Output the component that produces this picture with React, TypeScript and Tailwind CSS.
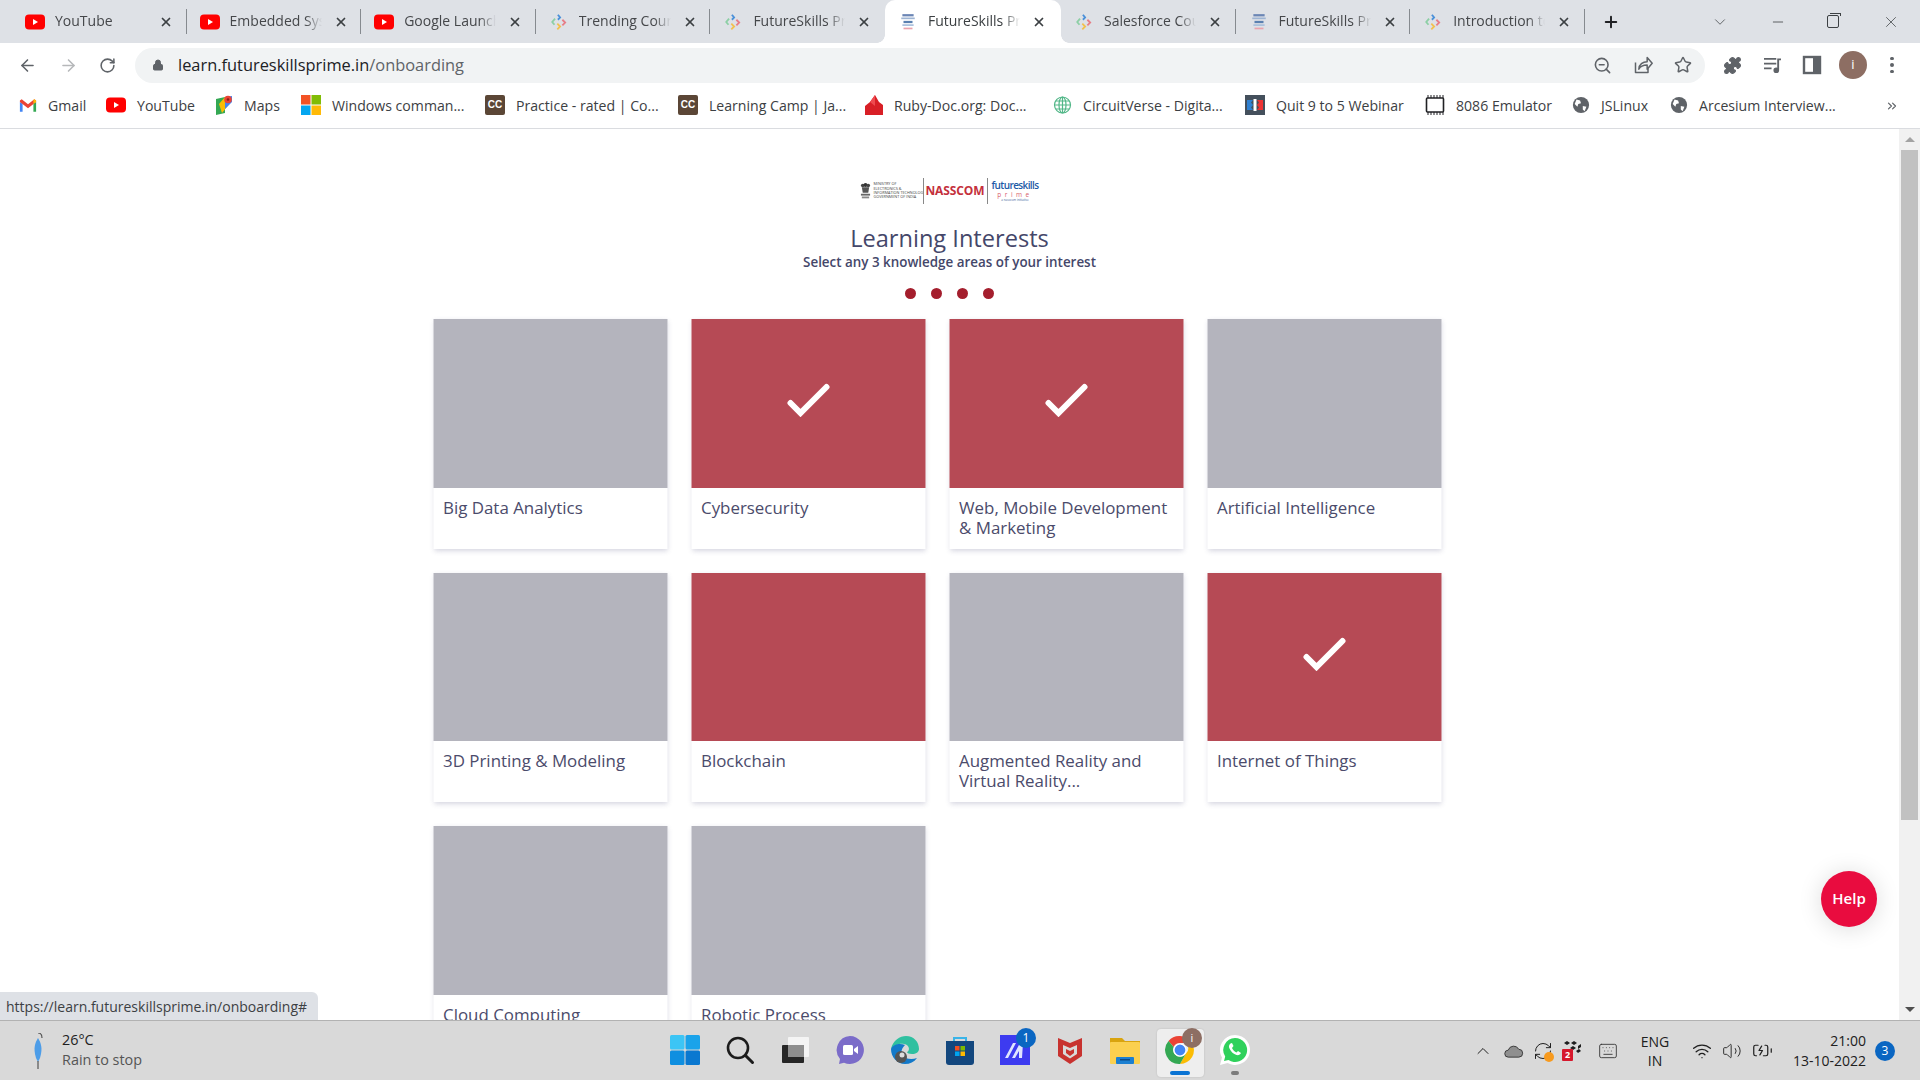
import {
  ArrowLeft,
  ArrowRight,
  BatteryCharging,
  ChevronDown,
  ChevronUp,
  ChevronsRight,
  Keyboard,
  Lock,
  Minus,
  Plus,
  Puzzle,
  RefreshCw,
  RotateCw,
  Star,
  Volume2,
  Wifi,
  X,
  ZoomOut,
} from "lucide-react";

const ui = "font-['Open_Sans',sans-serif]";

function YouTubeIcon() {
  return (
    <svg viewBox="0 0 20 20" className="w-5 h-5 shrink-0">
      <rect x="0" y="2.5" width="20" height="15" rx="4" fill="#f00" />
      <path d="M8 7l5 3-5 3z" fill="#fff" />
    </svg>
  );
}

function FsIcon() {
  return (
    <svg viewBox="0 0 16 16" className="w-[18px] h-[18px] shrink-0" fill="none" strokeWidth="1.6">
      <path d="M4.5 5L2 8l2 2.5" stroke="#8ccfa5" />
      <path d="M7 1.5L9 4 7 6" stroke="#4a90d9" />
      <path d="M11 6l2.5 2.5L11 11" stroke="#e77d86" />
      <path d="M6.5 9.5l2.5 2.5-2.5 2.5" stroke="#f2c14e" />
    </svg>
  );
}

function StackIcon() {
  return (
    <svg viewBox="0 0 16 16" className="w-[18px] h-[18px] shrink-0">
      <rect x="3" y="1" width="10" height="2" fill="#6b86b5" />
      <rect x="2" y="4" width="12" height="1.5" fill="#9db4d3" />
      <rect x="4" y="7" width="8" height="2" fill="#5a80b0" />
      <rect x="3" y="10" width="10" height="1.5" fill="#a8c0dc" />
      <rect x="4" y="13" width="8" height="1.5" fill="#e9a3ad" />
    </svg>
  );
}

function GmailIcon() {
  return (
    <svg viewBox="0 0 20 16" className="w-[18px] h-[15px] shrink-0">
      <path d="M1 15V4l3 2v9z" fill="#4285f4" />
      <path d="M16 15V6l3-2v11z" fill="#34a853" />
      <path d="M1 4l9 7 9-7V2.5L17 1l-7 5.5L3 1 1 2.5z" fill="#ea4335" />
      <path d="M16 6l3-2V2.5L17 1l-1 .8z" fill="#fbbc04" />
    </svg>
  );
}

function MapsIcon() {
  return (
    <svg viewBox="0 0 18 20" className="w-[18px] h-5 shrink-0">
      <path d="M1 4l9-2v16l-9 2z" fill="#34a853" />
      <path d="M4 9l6-7h6v5L7 18z" fill="#fbbc04" />
      <path d="M10 2l7-1v6l-7 7z" fill="#4285f4" />
      <circle cx="13" cy="4.5" r="3.8" fill="#ea4335" />
      <circle cx="13" cy="4.5" r="1.3" fill="#8c1d18" />
    </svg>
  );
}

function WindowsIcon() {
  return (
    <svg viewBox="0 0 20 20" className="w-5 h-5 shrink-0">
      <rect x="0" y="0" width="9.5" height="9.5" fill="#f35325" />
      <rect x="10.5" y="0" width="9.5" height="9.5" fill="#81bc06" />
      <rect x="0" y="10.5" width="9.5" height="9.5" fill="#05a6f0" />
      <rect x="10.5" y="10.5" width="9.5" height="9.5" fill="#ffba08" />
    </svg>
  );
}

function CcIcon() {
  return (
    <div className="w-5 h-5 shrink-0 bg-[#5b4636] rounded-[2px] flex items-center justify-center text-white text-[10px] font-bold leading-none font-['Liberation_Sans',sans-serif]">
      CC
    </div>
  );
}

function RubyIcon() {
  return (
    <svg viewBox="0 0 18 20" className="w-[18px] h-5 shrink-0">
      <path d="M0 20V11l5-4 5-7 4 7 4 3v10z" fill="#d81f26" />
      <path d="M5 7l5-7v11z" fill="#ef4a4f" />
    </svg>
  );
}

function CircuitIcon() {
  return (
    <svg viewBox="0 0 20 20" className="w-5 h-5 shrink-0" fill="none" stroke="#52b788" strokeWidth="1.2">
      <circle cx="10.5" cy="10" r="8" />
      <ellipse cx="10.5" cy="10" rx="3.5" ry="8" />
      <path d="M2.5 10h16M3.5 6h14M3.5 14h14M10.5 2v16" />
    </svg>
  );
}

function QuitIcon() {
  return (
    <svg viewBox="0 0 20 20" className="w-5 h-5 shrink-0">
      <rect width="20" height="20" fill="#44505c" />
      <path d="M2 5h6l-2 2.5L8 10l-2 2.5L8 15H2z" fill="#2f80d1" />
      <path d="M18 5h-6l2 2.5-2 2.5 2 2.5-2 2.5h6z" fill="#e33" />
      <rect x="8.5" y="4" width="3" height="12" fill="#fff" />
    </svg>
  );
}

function ChipIcon() {
  return (
    <svg viewBox="0 0 20 20" className="w-5 h-5 shrink-0" fill="none" stroke="#202124">
      <rect x="1.5" y="3" width="17" height="14" rx="1" strokeWidth="1.6" />
      <path d="M3 3V0M6 3V0M9 3V0M12 3V0M15 3V0M18 3V0M3 20v-3M6 20v-3M9 20v-3M12 20v-3M15 20v-3M18 20v-3" strokeWidth="1" />
    </svg>
  );
}

function GlobeIcon() {
  return (
    <svg viewBox="0 0 20 20" className="w-[18px] h-[18px] shrink-0">
      <circle cx="10" cy="10" r="9" fill="#5f6368" />
      <path d="M5 4l4 1 1 3-3 1-1 3-3-3zM12 11l4 1-2 5-2-2z" fill="#fff" />
    </svg>
  );
}

function EmblemIcon() {
  return (
    <svg viewBox="0 0 12 18" className="w-[11px] h-[18px] shrink-0">
      <circle cx="3" cy="3" r="2" fill="#444" />
      <circle cx="6" cy="2.5" r="2.2" fill="#333" />
      <circle cx="9" cy="3" r="2" fill="#444" />
      <path d="M2 5h8l-1 6H3z" fill="#555" />
      <rect x="1" y="12" width="10" height="2" fill="#666" />
      <rect x="2" y="15" width="8" height="2" fill="#888" />
    </svg>
  );
}

function CheckMark() {
  return (
    <svg viewBox="0 0 44 34" className="w-11 h-[34px] mb-[6px]" fill="none" stroke="#fff" strokeWidth="6" strokeLinecap="round" strokeLinejoin="miter">
      <path d="M4 20l10 10L40 4" />
    </svg>
  );
}

const tabs = [
  { title: "YouTube", icon: <YouTubeIcon />, sep: true },
  { title: "Embedded Systems", icon: <YouTubeIcon />, sep: true },
  { title: "Google Launches", icon: <YouTubeIcon />, sep: true },
  { title: "Trending Courses", icon: <FsIcon />, sep: true },
  { title: "FutureSkills Prime", icon: <FsIcon />, sep: false },
  { title: "FutureSkills Prime", icon: <StackIcon />, sep: false, active: true },
  { title: "Salesforce Course", icon: <FsIcon />, sep: true },
  { title: "FutureSkills Prime", icon: <StackIcon />, sep: true },
  { title: "Introduction to", icon: <FsIcon />, sep: true },
];

const bookmarks = [
  { label: "Gmail", icon: <GmailIcon />, w: "w-[87px]" },
  { label: "YouTube", icon: <YouTubeIcon />, w: "w-[109px]" },
  { label: "Maps", icon: <MapsIcon />, w: "w-[86px]" },
  { label: "Windows comman...", icon: <WindowsIcon />, w: "w-[184px]" },
  { label: "Practice - rated | Co...", icon: <CcIcon />, w: "w-[193px]" },
  { label: "Learning Camp | Ja...", icon: <CcIcon />, w: "w-[187px]" },
  { label: "Ruby-Doc.org: Doc...", icon: <RubyIcon />, w: "w-[187px]" },
  { label: "CircuitVerse - Digita...", icon: <CircuitIcon />, w: "w-[193px]" },
  { label: "Quit 9 to 5 Webinar", icon: <QuitIcon />, w: "w-[180px]" },
  { label: "8086 Emulator", icon: <ChipIcon />, w: "w-[147px]" },
  { label: "JSLinux", icon: <GlobeIcon />, w: "w-[98px]" },
  { label: "Arcesium Interview...", icon: <GlobeIcon />, w: "w-[170px]" },
];

const interests = [
  { label: "Big Data Analytics" },
  { label: "Cybersecurity", on: true, check: true },
  { label: "Web, Mobile Development & Marketing", on: true, check: true },
  { label: "Artificial Intelligence" },
  { label: "3D Printing & Modeling" },
  { label: "Blockchain", on: true },
  { label: "Augmented Reality and Virtual Reality..." },
  { label: "Internet of Things", on: true, check: true },
  { label: "Cloud Computing" },
  { label: "Robotic Process Automation" },
];

function TabStrip() {
  return (
    <div className="h-[43px] shrink-0 bg-[#dee1e6] flex items-start pl-[12px]">
      {tabs.map((t, i) => (
        <div
          key={i}
          className={
            t.active
              ? "relative w-[176px] h-[43px] bg-white rounded-t-[10px] flex items-center pl-[13px]"
              : "relative w-[174.6px] h-[43px] flex items-center pl-[13px]"
          }
        >
          <div className="w-5 flex justify-center shrink-0">{t.icon}</div>
          <span
            className={`${t.active ? "text-[#3c4043]" : "text-[#45474a]"} ml-[10px] mb-[2px] w-[92px] overflow-hidden whitespace-nowrap text-[14px] [mask-image:linear-gradient(to_right,black_82%,transparent)]`}
          >
            {t.title}
          </span>
          <X className="w-[14px] h-[14px] ml-[12px] text-[#3c4043] shrink-0" strokeWidth={3} />
          {t.sep && <div className="absolute right-0 top-[9px] h-[25px] w-px bg-[#868a8f]" />}
          {t.active && (
            <>
              <div className="absolute bottom-0 -left-2 w-2 h-2 bg-[radial-gradient(circle_at_0_0,#dee1e6_7.5px,#fff_8px)]" />
              <div className="absolute bottom-0 -right-2 w-2 h-2 bg-[radial-gradient(circle_at_100%_0,#dee1e6_7.5px,#fff_8px)]" />
            </>
          )}
        </div>
      ))}
      <div className="h-[43px] flex items-center ml-[17px]">
        <Plus className="w-[18px] h-[18px] text-[#202124]" strokeWidth={2.6} />
      </div>
      <div className="h-[43px] flex-1 flex items-center justify-end text-[#3c4043]">
        <ChevronDown className="w-[18px] h-[18px] mr-[41px]" strokeWidth={1} />
        <Minus className="w-[16px] h-[16px] mr-[41px]" strokeWidth={1.2} />
        <div className="relative w-[12px] h-[13px] mr-[43px] border border-[#3c4043] rounded-[2px] bg-[#dee1e6]">
          <div className="absolute -top-[3px] left-[2px] w-[11px] h-[3px] border-t border-r border-[#3c4043]" />
        </div>
        <X className="w-[18px] h-[18px] mr-[20px]" strokeWidth={1} />
      </div>
    </div>
  );
}

function Toolbar() {
  return (
    <div className="h-[42px] shrink-0 bg-white flex items-center text-[#5f6368] pl-[18px] pt-[2px]">
      <ArrowLeft className="w-[19px] h-[19px] mr-[22px]" strokeWidth={2} />
      <ArrowRight className="w-[19px] h-[19px] mr-[21px] text-[#b6b8ba]" strokeWidth={2} />
      <RotateCw className="w-[17px] h-[17px] mr-[19px]" strokeWidth={2.2} />
      <div className="w-[1570px] h-[35px] rounded-full bg-[#f1f3f4] flex items-center pl-[17px] pr-[13px]">
        <Lock className="w-[12px] h-[14px] fill-[#5f6368] mr-[14px]" strokeWidth={2} />
        <span className="text-[16.4px] text-[#202124]">
          learn.futureskillsprime.in<span className="text-[#5f6368]">/onboarding</span>
        </span>
        <div className="flex-1" />
        <ZoomOut className="w-[19px] h-[19px] mr-[21px]" strokeWidth={2} />
        <svg viewBox="0 0 24 24" className="w-[20px] h-[20px] mr-[21px]" fill="none" stroke="#5f6368" strokeWidth="1.8" strokeLinejoin="round">
          <path d="M3 9v12h15v-5" />
          <path d="M7 17c0-6 5-9 10-9V3l6 7-6 7v-5c-4 0-8 1-10 5z" />
        </svg>
        <Star className="w-[18px] h-[18px]" strokeWidth={2} />
      </div>
      <Puzzle className="w-[19px] h-[19px] ml-[18px] fill-[#5f6368]" strokeWidth={1.5} />
      <svg viewBox="0 0 20 18" className="w-[19px] h-[17px] ml-[21px]" fill="none" stroke="#5f6368" strokeWidth="2">
        <path d="M1 2h13M1 7h13M1 12h8M16 14V2.5h3" />
        <circle cx="14" cy="14" r="2" fill="#5f6368" />
      </svg>
      <svg viewBox="0 0 20 20" className="w-[20px] h-[20px] ml-[20px]">
        <rect x="2" y="2" width="16" height="16" fill="none" stroke="#5f6368" strokeWidth="2.4" />
        <rect x="11" y="2" width="7" height="16" fill="#5f6368" />
      </svg>
      <div className="w-7 h-7 ml-[17px] rounded-full bg-[#8d6e63] text-white text-[13px] flex items-center justify-center">i</div>
      <div className="ml-[23px] flex flex-col gap-[3px]">
        <div className="w-[3.5px] h-[3.5px] rounded-full bg-[#5f6368]" />
        <div className="w-[3.5px] h-[3.5px] rounded-full bg-[#5f6368]" />
        <div className="w-[3.5px] h-[3.5px] rounded-full bg-[#5f6368]" />
      </div>
    </div>
  );
}

function BookmarkBar() {
  return (
    <div className="h-[44px] shrink-0 bg-white border-b border-[#dadce0] flex items-center pl-[19px] pb-[2px]">
      {bookmarks.map((b) => (
        <div key={b.label} className={`${b.w} flex items-center gap-[11px] shrink-0`}>
          {b.icon}
          <span className="text-[14.1px] text-[#3c4043] whitespace-nowrap">{b.label}</span>
        </div>
      ))}
      <ChevronsRight className="w-[14px] h-[14px] ml-[45px] text-[#5f6368]" strokeWidth={2} />
    </div>
  );
}

function Logo() {
  return (
    <div className="h-[27px] flex items-center">
      <EmblemIcon />
      <div className="ml-[2px] flex flex-col text-[3.8px] leading-[4.3px] text-[#444] w-[50px] whitespace-nowrap overflow-hidden">
        <span>MINISTRY OF</span>
        <span>ELECTRONICS &amp;</span>
        <span>INFORMATION TECHNOLOGY</span>
        <span>GOVERNMENT OF INDIA</span>
      </div>
      <div className="w-px h-[26px] bg-[#888]" />
      <span className="ml-[1px] text-[12px] font-bold text-[#c4303c] tracking-[-0.1px]">NASSCOM</span>
      <div className="w-px h-[26px] bg-[#888] ml-[2px]" />
      <div className="ml-1 flex flex-col items-center leading-none">
        <span className="text-[10px] font-semibold text-[#1c5aa6] tracking-[-0.6px] leading-[11px]">futureskills</span>
        <span className="text-[6.5px] text-[#d8606c] tracking-[3.5px] leading-[7px]">prime</span>
        <span className="text-[3px] text-[#3a5f9c] leading-[4px]">a nasscom initiative</span>
      </div>
    </div>
  );
}

function InterestCard({ label, on, check }: { label: string; on?: boolean; check?: boolean }) {
  return (
    <div className="w-[234px] h-[229.5px] mr-6 mb-6 bg-white shadow-[0_2px_5px_rgba(70,70,120,0.22)]">
      <div className={`${on ? "bg-[#b64a55]" : "bg-[#b4b4bd]"} h-[168.5px] flex items-center justify-center`}>
        {check && <CheckMark />}
      </div>
      <div className="px-[10px] pt-[10px] text-[16.9px] leading-5 text-[#4b4b6b]">{label}</div>
    </div>
  );
}

function Scrollbar() {
  return (
    <div className="w-[21px] shrink-0 bg-[#f1f1f1] flex flex-col items-center">
      <div className="h-[21px] flex items-center justify-center">
        <div className="border-x-[5px] border-x-transparent border-b-[5px] border-b-[#a3a3a3]" />
      </div>
      <div className="w-[17px] h-[670px] bg-[#c1c1c1]" />
      <div className="flex-1" />
      <div className="h-[21px] flex items-center justify-center">
        <div className="border-x-[5px] border-x-transparent border-t-[5px] border-t-[#505050]" />
      </div>
    </div>
  );
}

function ChromeIcon() {
  return (
    <svg viewBox="0 0 30 30" className="w-[30px] h-[30px]">
      <path d="M15 1a14 14 0 0 1 12.1 7H15a7 7 0 0 0-6.4 4.1L3.5 6A14 14 0 0 1 15 1z" fill="#ea4335" />
      <path d="M27.1 8A14 14 0 0 1 15 29l6-10.5A7 7 0 0 0 21 8z" fill="#fbbc04" />
      <path d="M3.5 6A14 14 0 0 0 15 29l6-10.5a7 7 0 0 1-12.4-6.4z" fill="#34a853" />
      <circle cx="15" cy="15" r="6" fill="#4285f4" stroke="#fff" strokeWidth="1.2" />
    </svg>
  );
}

function TaskbarApps() {
  return (
    <div className="flex items-center gap-[25px] -mt-[1px] shrink-0">
      <svg viewBox="0 0 30 30" className="w-[30px] h-[30px]">
        <rect x="0" y="0" width="14.5" height="14.5" rx="1.5" fill="#3cc5f5" />
        <rect x="15.5" y="0" width="14.5" height="14.5" rx="1.5" fill="#1aa3ea" />
        <rect x="0" y="15.5" width="14.5" height="14.5" rx="1.5" fill="#0f8fe0" />
        <rect x="15.5" y="15.5" width="14.5" height="14.5" rx="1.5" fill="#0a78d0" />
      </svg>
      <svg viewBox="0 0 30 30" className="w-[30px] h-[30px]" fill="none" stroke="#1c1c1c">
        <circle cx="13" cy="13" r="10" strokeWidth="2.6" />
        <path d="M20.5 20.5l7 7" strokeWidth="3" strokeLinecap="round" />
      </svg>
      <svg viewBox="0 0 30 30" className="w-[30px] h-[30px]">
        <rect x="2" y="10" width="22" height="18" rx="1" fill="#262626" />
        <rect x="8" y="2" width="21" height="20" rx="1" fill="#f4f4f4" />
        <rect x="8" y="10" width="16" height="12" fill="#8e8e8e" />
      </svg>
      <svg viewBox="0 0 30 30" className="w-[30px] h-[30px]">
        <path d="M15 1a14 14 0 1 1-6 26.7L4 29l1-5A14 14 0 0 1 15 1z" fill="#7b6cc9" />
        <rect x="8" y="10" width="10" height="10" rx="1.5" fill="#fff" />
        <path d="M19 14l4-3v8l-4-3z" fill="#fff" />
      </svg>
      <svg viewBox="0 0 30 30" className="w-[30px] h-[30px]">
        <path d="M1 14C3 5 10 1 16 1c8 0 13 6 13 13 0 3-3 5-7 5-3 0-5-1-5-2 3-1 3-7-3-8-5-1-10 2-13 5z" fill="#2fc0a0" />
        <path d="M1 14c0 8 6 15 14 15 5 0 9-2 12-6-5 2-12 1-14-2-3-4-1-8 2-11C10 8 3 9 1 14z" fill="#1379c9" />
        <circle cx="11" cy="22" r="6" fill="#555" />
        <circle cx="12" cy="20" r="2.5" fill="#ddd" />
      </svg>
      <svg viewBox="0 0 30 30" className="w-[30px] h-[30px]" fill="none">
        <path d="M9 7V3h12v4" stroke="#39b4e8" strokeWidth="2" />
        <path d="M1 6h28v21a3 3 0 0 1-3 3H4a3 3 0 0 1-3-3z" fill="#13477e" />
        <rect x="10" y="11" width="4.5" height="4.5" fill="#f25022" />
        <rect x="15.5" y="11" width="4.5" height="4.5" fill="#7fba00" />
        <rect x="10" y="16.5" width="4.5" height="4.5" fill="#00a4ef" />
        <rect x="15.5" y="16.5" width="4.5" height="4.5" fill="#ffb900" />
      </svg>
      <div className="relative w-[30px] h-[30px]">
        <svg viewBox="0 0 30 30" className="w-[30px] h-[30px]">
          <rect width="30" height="30" fill="#3d3bf0" />
          <path d="M5 23L13 8h3L8 23zM12 23l8-15h3l-1 15h-3v-7l-4 7z" fill="#dfe4ff" />
        </svg>
        <div className="absolute -top-[7px] -right-[6px] w-5 h-5 rounded-full bg-[#0a66c2] text-white text-[12px] flex items-center justify-center">1</div>
      </div>
      <svg viewBox="0 0 30 30" className="w-[30px] h-[30px]">
        <path d="M3 3l12 5 12-5v18L15 29 3 21z" fill="#c8322f" />
        <path d="M8 10l7 3 7-3v9l-7 4.5-7-4.5z" fill="#d9d9d9" />
        <path d="M11 14l4 2 4-2v4l-4 3-4-3z" fill="#c8322f" />
      </svg>
      <svg viewBox="0 0 30 30" className="w-[30px] h-[30px]">
        <path d="M0 3h12l3 3h15v6H0z" fill="#d9a40f" />
        <rect y="7" width="30" height="22" rx="1" fill="#fbd04f" />
        <rect x="6" y="22" width="18" height="7" rx="1" fill="#1b7fd1" />
        <rect x="10" y="24" width="10" height="1.5" fill="#0c4a86" />
      </svg>
      <div className="relative w-[30px] h-[30px]">
        <div className="absolute -top-[6px] -left-2 w-[47px] h-[48px] rounded-[4px] bg-[#eeeeee] shadow-[0_0_2px_rgba(0,0,0,0.15)]" />
        <div className="absolute -bottom-[10px] left-[5px] w-5 h-[4px] rounded-full bg-[#0a74d4]" />
        <div className="relative">
          <ChromeIcon />
        </div>
        <div className="absolute -top-[7px] right-[-7px] w-5 h-5 rounded-full bg-[#8d6e63] text-white text-[11px] flex items-center justify-center">i</div>
      </div>
      <div className="relative w-[30px] h-[30px]">
        <svg viewBox="0 0 30 30" className="w-[30px] h-[30px]">
          <path d="M15 0a15 15 0 1 1-7.5 28L0 30l2-7.5A15 15 0 0 1 15 0z" fill="#fff" />
          <path d="M15 3a12 12 0 1 1-6.5 22L4 26l1.2-4.5A12 12 0 0 1 15 3z" fill="#30d15c" />
          <path d="M10.5 8.5c-1.5 1-2 3-1 5 1.5 3.5 4 5.5 7 6.5 2 .5 4-.5 4.5-2l-3-2-1.5 1.5c-2-.8-3.5-2.3-4.5-4.5L13.5 11l-1.5-3z" fill="#fff" />
        </svg>
        <div className="absolute -bottom-[10px] left-[11px] w-[8px] h-[4px] rounded-full bg-[#7c7c7c]" />
      </div>
    </div>
  );
}

function Tray() {
  return (
    <div className="flex items-center text-[#202020] h-full">
      <ChevronUp className="w-5 h-5 mr-[10px]" strokeWidth={1.2} />
      <svg viewBox="0 0 22 16" className="w-[21px] h-[14px] mr-[9px]">
        <path d="M5 15a4 4 0 0 1 0-8 6.5 6.5 0 0 1 12-1 4.5 4.5 0 0 1 0 9z" fill="#8f8f8f" stroke="#303030" strokeWidth="1" />
      </svg>
      <div className="relative w-5 h-5 mr-[9px]">
        <RefreshCw className="w-5 h-5" strokeWidth={1.2} />
        <div className="absolute -bottom-[1px] -right-[1px] w-[10px] h-[10px] rounded-full bg-[#f79a1e]" />
      </div>
      <div className="relative w-5 h-5 mr-[16px]">
        <svg viewBox="0 0 20 20" className="w-5 h-5">
          <path d="M2 2l3-2 3 2-3 2zM9 2l3-2 3 2-3 2zM16 5l3-2v3l-3 2zM8 7l3-2 3 2-3 2zM14 10l3-2 2 2-3 2z" fill="#1d1d1d" />
        </svg>
        <div className="absolute left-0 bottom-0 w-[11px] h-[12px] rounded-[1px] bg-[#d6182d] text-white text-[9px] font-bold leading-[12px] text-center">2</div>
      </div>
      <Keyboard className="w-[20px] h-[20px] mr-[18px] text-[#3a3a3a]" strokeWidth={1.1} />
      <div className="w-[38px] text-center text-[14px] leading-[19px] mr-[18px]">
        ENG
        <br />
        IN
      </div>
      <Wifi className="w-[20px] h-[20px] mr-[10px]" strokeWidth={1.6} />
      <Volume2 className="w-[20px] h-[20px] mr-[10px]" strokeWidth={1.1} />
      <BatteryCharging className="w-[21px] h-[21px] mr-[19px]" strokeWidth={1.4} />
      <div className="w-[74px] text-right text-[14px] leading-[20px] mr-[9px]">
        21:00
        <br />
        13-10-2022
      </div>
      <div className="w-5 h-5 rounded-full bg-[#0a66c2] text-white text-[12px] flex items-center justify-center mr-[25px]">3</div>
    </div>
  );
}

function Taskbar() {
  return (
    <div className="h-[60px] shrink-0 bg-[#d9d9d9] border-t border-[#b2b2b2] flex items-center">
      <div className="flex items-center pl-[31px] w-[670px] shrink-0">
        <svg viewBox="0 0 14 36" className="w-[14px] h-[36px] mr-[17px]">
          <path d="M7 0c3 0 4 2 4 5" fill="none" stroke="#555" strokeWidth="1.2" />
          <path d="M7 5c3 5 5 10 2 20l-2 4-2-4C2 15 4 10 7 5z" fill="#4d9de8" />
          <path d="M7 28v8" stroke="#555" strokeWidth="1.2" />
        </svg>
        <div className="text-[14.4px] leading-[20px] -mt-[2px]">
          <div className="text-[#1f1f1f]">26°C</div>
          <div className="text-[#555555]">Rain to stop</div>
        </div>
      </div>
      <TaskbarApps />
      <div className="flex-1 flex justify-end h-full">
        <Tray />
      </div>
    </div>
  );
}

export default function App() {
  return (
    <div className={`${ui} w-[1920px] h-[1080px] overflow-hidden flex flex-col bg-white`}>
      <TabStrip />
      <Toolbar />
      <BookmarkBar />

      <div className="flex-1 min-h-0 flex relative">
        <main className="flex-1 min-w-0 overflow-hidden flex flex-col items-center pt-[49px]">
          <Logo />
          <h1 className="mt-[18px] text-[23.6px] leading-8 font-medium text-[#45476a]">Learning Interests</h1>
          <p className="text-[13.4px] leading-[16px] font-semibold text-[#45476a]">Select any 3 knowledge areas of your interest</p>
          <div className="mt-[18px] flex gap-[15.2px]">
            <div className="w-[11px] h-[11px] rounded-full bg-[#a41e2d]" />
            <div className="w-[11px] h-[11px] rounded-full bg-[#a41e2d]" />
            <div className="w-[11px] h-[11px] rounded-full bg-[#a41e2d]" />
            <div className="w-[11px] h-[11px] rounded-full bg-[#a41e2d]" />
          </div>
          <div className="mt-[20px] w-[1032px] flex flex-wrap shrink-0 -translate-x-[0.5px]">
            {interests.map((c) => (
              <InterestCard key={c.label} label={c.label} on={c.on} check={c.check} />
            ))}
          </div>
        </main>
        <Scrollbar />

        {/* link preview + help sit over the page */}
        <div className="absolute left-0 bottom-0 w-[318px] h-[28px] bg-[#dee1e6] rounded-tr-md flex items-center pl-[6px] text-[14px] text-[#3c4043]">
          https://learn.futureskillsprime.in/onboarding#
        </div>
        <div className="absolute left-[1821px] top-[742px] w-14 h-14 rounded-full bg-[#e90c3f] text-white font-semibold text-[15px] flex items-center justify-center pb-[2px] shadow-[0_2px_24px_rgba(0,0,0,0.14)]">
          Help
        </div>
      </div>

      <Taskbar />
    </div>
  );
}
